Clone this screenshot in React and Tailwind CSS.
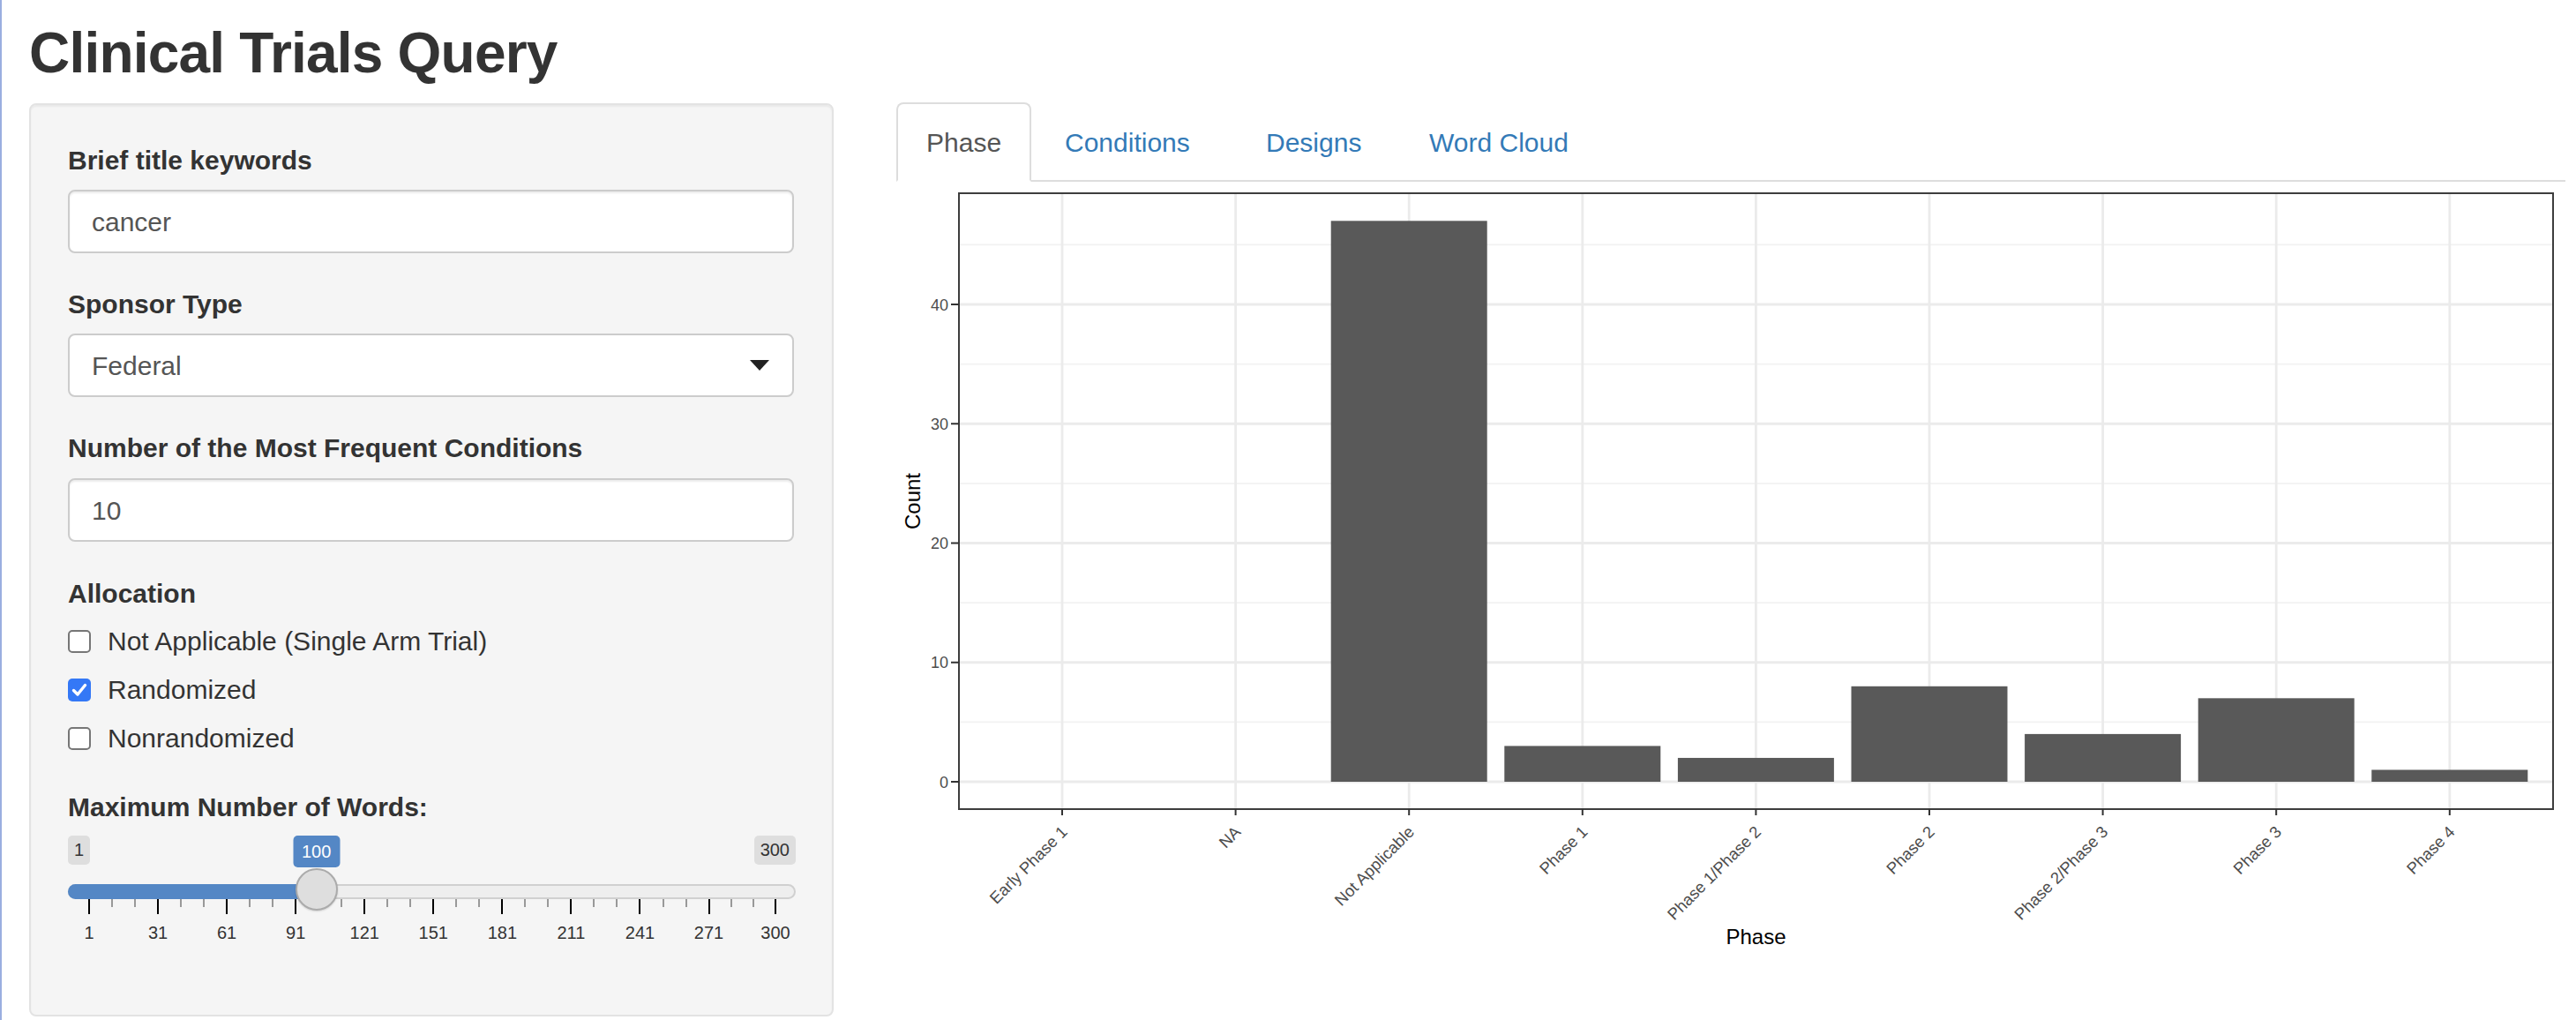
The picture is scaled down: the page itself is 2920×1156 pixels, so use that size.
import React from 'react'

const phases = [
  ['Early Phase 1', 0],
  ['NA', 0],
  ['Not Applicable', 47],
  ['Phase 1', 3],
  ['Phase 1/Phase 2', 2],
  ['Phase 2', 8],
  ['Phase 2/Phase 3', 4],
  ['Phase 3', 7],
  ['Phase 4', 1],
]

// chart geometry, measured in page pixels then shifted to the svg origin
const OX = 1016
const OY = 206
const PL = 1087 - OX
const PR = 2894 - OX
const PT = 219 - OY
const PB = 917 - OY
const ZERO = 886 - OY
const UNIT = 13.525
const STEP = 196.6
const cx = (i) => 1204 - OX + i * STEP
const yv = (v) => ZERO - v * UNIT

function PhaseChart() {
  const major = [0, 10, 20, 30, 40]
  const minor = [5, 15, 25, 35, 45]
  return (
    <svg width="1892" height="950" className="block">
      <rect x={PL} y={PT} width={PR - PL} height={PB - PT} fill="#ffffff" />
      {minor.map((v) => (
        <line key={'mn' + v} x1={PL} x2={PR} y1={yv(v)} y2={yv(v)} stroke="#f2f2f2" strokeWidth="1.6" />
      ))}
      {major.map((v) => (
        <line key={'mj' + v} x1={PL} x2={PR} y1={yv(v)} y2={yv(v)} stroke="#ebebeb" strokeWidth="2.8" />
      ))}
      {phases.map((p, i) => (
        <line key={'vg' + i} x1={cx(i)} x2={cx(i)} y1={PT} y2={PB} stroke="#ebebeb" strokeWidth="2.8" />
      ))}
      {phases.map(([name, n], i) =>
        n > 0 ? (
          <rect key={'b' + name} x={cx(i) - 88.5} y={yv(n)} width="177" height={n * UNIT} fill="#595959" />
        ) : null
      )}
      <rect x={PL} y={PT} width={PR - PL} height={PB - PT} fill="none" stroke="#3d3d3d" strokeWidth="2" />

      {/* y axis */}
      {major.map((v) => (
        <g key={'yl' + v}>
          <line x1={PL - 9} x2={PL} y1={yv(v)} y2={yv(v)} stroke="#333333" strokeWidth="2" />
          <text x={PL - 12} y={yv(v) + 6.5} textAnchor="end" fontSize="18" fill="#4d4d4d" fontFamily="Liberation Sans, Arial, sans-serif">
            {v}
          </text>
        </g>
      ))}
      <text
        x="0"
        y="0"
        transform={`translate(${1043 - OX} ${568 - OY}) rotate(-90)`}
        textAnchor="middle"
        fontSize="24"
        fill="#000000"
        fontFamily="Liberation Sans, Arial, sans-serif"
      >
        Count
      </text>

      {/* x axis */}
      {phases.map(([name], i) => (
        <g key={'xl' + name}>
          <line x1={cx(i)} x2={cx(i)} y1={PB} y2={PB + 7} stroke="#333333" strokeWidth="2" />
          <text
            x="0"
            y="0"
            transform={`translate(${cx(i) + 7} ${944 - OY}) rotate(-45)`}
            textAnchor="end"
            fontSize="18.5"
            fill="#4d4d4d"
            fontFamily="Liberation Sans, Arial, sans-serif"
          >
            {name}
          </text>
        </g>
      ))}
      <text x={(PL + PR) / 2} y={1070 - OY} textAnchor="middle" fontSize="24" fill="#000000" fontFamily="Liberation Sans, Arial, sans-serif">
        Phase
      </text>
    </svg>
  )
}

function Checkbox({ checked, label }) {
  return (
    <div className="flex items-center h-[43px]">
      {checked ? (
        <div className="w-[26px] h-[26px] rounded-[5px] bg-[#3478f6] flex items-center justify-center">
          <svg width="18" height="16" viewBox="0 0 18 16">
            <path d="M2.5 8.5 L7 13 L15.5 2.5" fill="none" stroke="#ffffff" strokeWidth="3.4" strokeLinecap="round" strokeLinejoin="round" />
          </svg>
        </div>
      ) : (
        <div className="w-[26px] h-[26px] rounded-[5px] border-2 border-[#767676] bg-white" />
      )}
      <span className="ml-[19px] text-[30px] text-[#333333]">{label}</span>
    </div>
  )
}

function WordSlider() {
  const unit = 778 / 299
  const pos = (v) => 24 + (v - 1) * unit
  const majors = [1, 31, 61, 91, 121, 151, 181, 211, 241, 271, 300]
  const minors = []
  for (let k = 0; k < majors.length - 1; k++) {
    const a = majors[k]
    const b = majors[k + 1]
    minors.push(a + (b - a) / 3, a + (2 * (b - a)) / 3)
  }
  const val = pos(100)
  return (
    <div className="relative w-[825px] h-[125px]">
      <div className="absolute left-0 top-0 h-[33px] px-[7px] rounded-[5px] bg-[#dedede] text-[20px] leading-[33px] text-[#333333]">1</div>
      <div className="absolute right-0 top-0 h-[33px] px-[7px] rounded-[5px] bg-[#dedede] text-[20px] leading-[33px] text-[#333333]">300</div>
      <div
        className="absolute top-0 h-[36px] w-[53px] -translate-x-1/2 rounded-[5px] bg-[#5487c5] text-[20px] leading-[36px] text-white text-center"
        style={{ left: val }}
      >
        100
      </div>

      <div className="absolute left-0 right-0 top-[55px] h-[17px] rounded-full border-2 border-[#d0d0d0] bg-[#eeeeee]" />
      <div className="absolute left-0 top-[55px] h-[17px] rounded-l-full bg-[#5487c5]" style={{ width: val }} />

      {minors.map((v) => (
        <div key={'m' + v} className="absolute top-[72px] h-[9px] w-[2px] bg-[#999999]" style={{ left: pos(v) - 1 }} />
      ))}
      {majors.map((v) => (
        <div key={'M' + v} className="absolute top-[72px] h-[17px] w-[2px] bg-[#000000]" style={{ left: pos(v) - 1 }} />
      ))}
      {majors.map((v) => (
        <div
          key={'L' + v}
          className="absolute top-[98px] -translate-x-1/2 text-[20px] leading-[24px] text-[#333333]"
          style={{ left: pos(v) }}
        >
          {v}
        </div>
      ))}

      <div
        className="absolute top-[37px] h-[48px] w-[48px] -translate-x-1/2 rounded-full border-2 border-[#ababab] bg-[#dedede] shadow-[0_1px_2px_rgba(0,0,0,0.15)]"
        style={{ left: val }}
      />
    </div>
  )
}

function FieldLabel({ children, className = '' }) {
  return <div className={'text-[30px] leading-[43px] font-bold text-[#333333] ' + className}>{children}</div>
}

const boxCls =
  'h-[72px] w-[823px] rounded-[8px] border-2 border-[#cccccc] bg-white shadow-[inset_0_2px_2px_rgba(0,0,0,0.075)] flex items-center px-[25px] text-[30px] text-[#555555]'

export default function App() {
  return (
    <div className="w-[2920px] h-[1156px] overflow-hidden bg-white border-l-2 border-[#9aaee0] font-['Liberation_Sans',Arial,sans-serif]">
      <h2 className="pt-[28px] pl-[31px] h-[92px] text-[64px] leading-[64px] font-bold tracking-[-0.8px] text-[#333333] mb-[25px]">
        Clinical Trials Query
      </h2>

      <div className="flex items-start">
        {/* sidebar */}
        <div className="ml-[31px] w-[912px] h-[1035px] rounded-[8px] border-2 border-[#e3e3e3] bg-[#f5f5f5] shadow-[inset_0_2px_2px_rgba(0,0,0,0.05)] pl-[42px] pt-[41px]">
          <FieldLabel>Brief title keywords</FieldLabel>
          <div className={boxCls + ' mt-[12px]'}>cancer</div>

          <FieldLabel className="mt-[36px]">Sponsor Type</FieldLabel>
          <div className={boxCls + ' mt-[12px] justify-between text-[#333333] shadow-none'}>
            <span>Federal</span>
            <svg width="22" height="12" viewBox="0 0 22 12" className="mr-[1px]">
              <path d="M0 0 H22 L11 12 Z" fill="#222222" />
            </svg>
          </div>

          <FieldLabel className="mt-[36px]">Number of the Most Frequent Conditions</FieldLabel>
          <div className={boxCls + ' mt-[13px]'}>10</div>

          <FieldLabel className="mt-[37px]">Allocation</FieldLabel>
          <div className="mt-[11px] flex flex-col gap-[12px]">
            <Checkbox label="Not Applicable (Single Arm Trial)" />
            <Checkbox checked label="Randomized" />
            <Checkbox label="Nonrandomized" />
          </div>

          <FieldLabel className="mt-[35px]">Maximum Number of Words:</FieldLabel>
          <div className="mt-[11px]">
            <WordSlider />
          </div>
        </div>

        {/* main panel */}
        <div className="ml-[71px] w-[1892px] -mt-[1px]">
          <div className="flex border-b-2 border-[#dddddd]">
            <div className="-mb-[2px] h-[90px] w-[153px] rounded-t-[8px] border-2 border-[#dddddd] border-b-white bg-white pl-[32px] flex items-center text-[30px] text-[#555555]">
              Phase
            </div>
            <div className="-mb-[2px] ml-[4px] h-[90px] w-[224px] pl-[34px] flex items-center text-[30px] text-[#337ab7]">Conditions</div>
            <div className="-mb-[2px] ml-[4px] h-[90px] w-[181px] pl-[34px] flex items-center text-[30px] text-[#337ab7]">Designs</div>
            <div className="-mb-[2px] ml-[4px] h-[90px] w-[231px] pl-[34px] flex items-center text-[30px] text-[#337ab7]">Word Cloud</div>
          </div>
          <PhaseChart />
        </div>
      </div>
    </div>
  )
}
